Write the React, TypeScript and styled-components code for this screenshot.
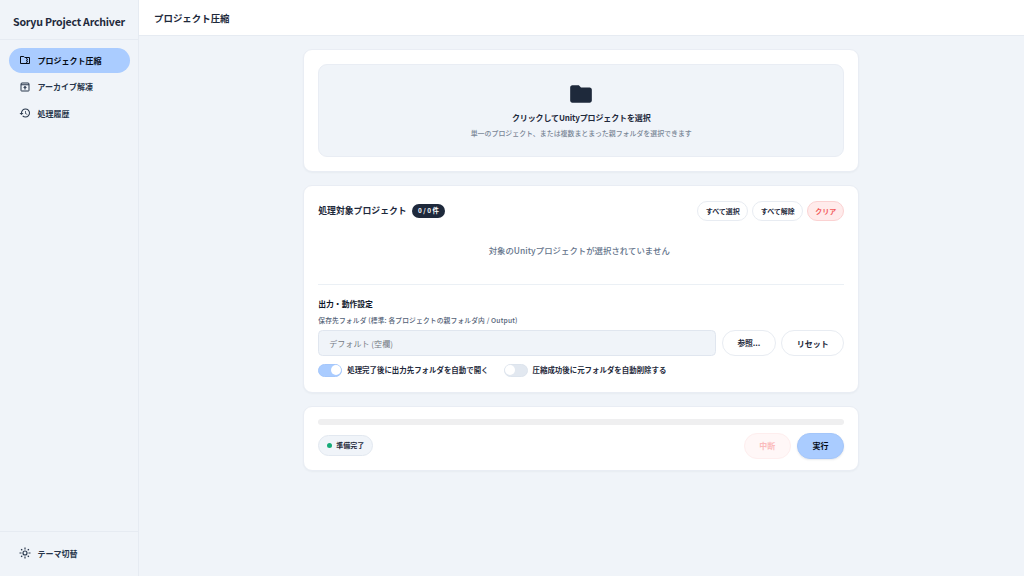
import React from "react";
import styled, { createGlobalStyle, css } from "styled-components";

const GlobalStyle = createGlobalStyle`
  *, *::before, *::after { box-sizing: border-box; }
  body {
    margin: 0;
    background: #f0f4f9;
    color: #1e293b;
    font-family: "Noto Sans CJK JP", "Noto Sans", sans-serif;
    overflow: hidden;
  }
  button, input { font-family: inherit; }
`;

const Shell = styled.div`
  display: grid;
  grid-template-columns: 138.5px 1fr;
  height: 100vh;
`;

const Sidebar = styled.aside`
  display: flex;
  flex-direction: column;
  border-right: 1px solid #e6ebf2;
`;

const Brand = styled.div`
  height: 40px;
  padding: 5px 0 0 13px;
  display: flex;
  align-items: center;
  border-bottom: 1px solid #e6ebf2;
  white-space: nowrap;
`;

const Nav = styled.nav`
  flex: 1;
  display: flex;
  flex-direction: column;
  gap: 2px;
  padding: 8px 8px 0 8.5px;
`;

const NavItem = styled.a<{ $active?: boolean }>`
  display: flex;
  align-items: center;
  gap: 6.5px;
  height: 24.5px;
  padding-left: 10.5px;
  border-radius: 13px;
  color: ${(p) => (p.$active ? "#050b16" : "#27364b")};
  background: ${(p) => (p.$active ? "#aaccff" : "transparent")};
  svg { flex: none; }
`;

const SideFooter = styled.div`
  height: 45px;
  padding: 9px 8px 0 8.5px;
  border-top: 1px solid #e6ebf2;
`;

const Main = styled.main`
  display: flex;
  flex-direction: column;
`;

const Header = styled.header`
  display: flex;
  align-items: center;
  height: 36px;
  padding: 2px 0 0 15.5px;
  background: #fff;
  border-bottom: 1px solid #e6ebf2;
`;

const Content = styled.div`
  display: flex;
  flex-direction: column;
  align-items: center;
  gap: 13.5px;
  padding-top: 12.5px;
`;

const Card = styled.section<{ $height: number }>`
  width: 556px;
  height: ${(p) => p.$height}px;
  padding: 14px;
  background: #fff;
  border: 1px solid #e9edf4;
  border-radius: 9px;
  box-shadow: 0 1px 2px rgba(30, 41, 59, 0.04);
`;

const Label = styled.span<{ $size: number; $spacing?: number; $weight?: number; $color?: string }>`
  font-size: ${(p) => p.$size}px;
  letter-spacing: ${(p) => p.$spacing ?? 0}px;
  font-weight: ${(p) => p.$weight ?? 700};
  line-height: 1.4;
  white-space: nowrap;
  ${(p) => p.$color && css`color: ${p.$color};`}
`;

const DropZone = styled.div`
  display: flex;
  flex-direction: column;
  align-items: center;
  height: 93px;
  padding-top: 16px;
  background: #f0f4f9;
  border: 1px solid #e9edf4;
  border-radius: 9px;
  svg { margin-bottom: 4px; }
`;

const Row = styled.div<{ $gap?: number; $height?: number; $top?: number }>`
  display: flex;
  align-items: center;
  gap: ${(p) => p.$gap ?? 0}px;
  height: ${(p) => (p.$height ? `${p.$height}px` : "auto")};
  margin-top: ${(p) => p.$top ?? 0}px;
`;

const Spacer = styled.div`
  flex: 1;
`;

const Count = styled.span`
  display: flex;
  align-items: center;
  justify-content: center;
  width: 33.5px;
  height: 14px;
  border-radius: 7px;
  color: #fff;
  background: #1e293b;
`;

const tones = {
  plain: css`color: #1e293b; background: #fff; border-color: #e8ecf2;`,
  danger: css`color: #f25a5a; background: #ffebeb; border-color: #fbd2d2;`,
  disabled: css`color: #fbbcbc; background: #fff7f7; border-color: #feeeee;`,
  primary: css`color: #050b16; background: #aaccff; border-color: #a4c6fa; box-shadow: 0 1px 2px rgba(30, 41, 59, 0.1);`,
};

const Button = styled.button<{ $width: number; $height: number; $tone?: keyof typeof tones }>`
  display: flex;
  flex: none;
  align-items: center;
  justify-content: center;
  width: ${(p) => p.$width}px;
  height: ${(p) => p.$height}px;
  padding: 1px 0 0;
  border: 1px solid;
  border-radius: 14px;
  ${(p) => tones[p.$tone ?? "plain"]}
`;

const Empty = styled.div`
  display: flex;
  justify-content: center;
  align-items: center;
  height: 63px;
  padding: 0 4px 4px 0;
  border-bottom: 1px solid #ebf0f5;
`;

const Settings = styled.div`
  display: flex;
  flex-direction: column;
  padding-top: 13.5px;
`;

const PathInput = styled.input`
  flex: 1;
  min-width: 0;
  height: 26px;
  padding: 1px 10px 0;
  border: 1px solid #e0e6ef;
  border-radius: 4.5px;
  background: #f0f4f9;
  font-size: 8px;
  letter-spacing: 0.05px;
  &::placeholder { color: #757b84; }
`;

const Switch = styled.span<{ $on?: boolean }>`
  display: flex;
  align-items: center;
  justify-content: ${(p) => (p.$on ? "flex-end" : "flex-start")};
  width: 24px;
  height: 13px;
  padding: 0 0.5px;
  border-radius: 7px;
  background: ${(p) => (p.$on ? "#aaccff" : "#e2e8f0")};
  border: 1px solid ${(p) => (p.$on ? "#a5c7fb" : "#dde4ed")};
  &::after {
    content: "";
    width: 10px;
    height: 10px;
    border-radius: 50%;
    background: #fff;
  }
`;

const Progress = styled.div`
  height: 5.5px;
  margin-top: -2px;
  border-radius: 3px;
  background: #efeff0;
`;

const Status = styled.div`
  display: flex;
  align-items: center;
  gap: 4px;
  width: 55px;
  height: 21px;
  padding-left: 8px;
  border: 1px solid #e2e8f0;
  border-radius: 11px;
  background: #f0f4f9;
  &::before {
    content: "";
    width: 5px;
    height: 5px;
    border-radius: 50%;
    background: #16ab78;
  }
`;

const ZipFolderIcon = () => (
  <svg width="12" height="12" viewBox="0 0 24 24" fill="none" stroke="currentColor" strokeWidth="2">
    <path d="M3 5h6.600l2 2H21v12H3z" strokeLinejoin="round" />
    <path d="M15 8v2h2v2h-2v2h2v2h-2v2" strokeWidth="1.500" />
  </svg>
);

const UnarchiveIcon = () => (
  <svg width="12" height="12" viewBox="0 0 24 24" fill="none" stroke="currentColor" strokeWidth="2">
    <path d="M5 4h14l1 2v13a1 1 0 0 1-1 1H5a1 1 0 0 1-1-1V6zM4 7.500h16" />
    <path d="M12 9.500l-4 4h2.800v3.500h2.400v-3.500H16z" fill="currentColor" stroke="none" />
  </svg>
);

const HistoryIcon = () => (
  <svg width="12" height="12" viewBox="0 0 24 24" fill="currentColor">
    <path d="M13 3a9 9 0 0 0-9 9H1l3.890 3.890.07.14L9 12H6c0-3.870 3.130-7 7-7s7 3.130 7 7-3.130 7-7 7c-1.930 0-3.680-.79-4.940-2.060l-1.420 1.420A8.954 8.954 0 0 0 13 21a9 9 0 0 0 0-18zm-1 5v5l4.280 2.540.72-1.210-3.500-2.080V8H12z" />
  </svg>
);

const SunIcon = () => (
  <svg width="12" height="12" viewBox="0 0 24 24" fill="none" stroke="currentColor" strokeWidth="2.300">
    <circle cx="12" cy="12" r="4" />
    <path d="M12 1v4M12 19v4M1 12h4M19 12h4M4.200 4.200L6.500 6.500M17.500 17.500l2.300 2.300M4.200 19.800l2.300-2.300M17.500 6.500l2.300-2.300" />
  </svg>
);

const FolderIcon = () => (
  <svg width="26" height="26" viewBox="0 0 24 24" fill="#1e293b">
    <path d="M10 4H4c-1.100 0-1.990.9-1.990 2L2 18c0 1.100.9 2 2 2h16c1.100 0 2-.9 2-2V8c0-1.100-.9-2-2-2h-8l-2-2z" />
  </svg>
);

export default function App() {
  return (
    <>
      <GlobalStyle />
      <Shell>
        <Sidebar>
          <Brand>
            <Label $size={10.6} $weight={700} $spacing={-0.22}>Soryu Project Archiver</Label>
          </Brand>
          <Nav>
            <NavItem $active>
              <ZipFolderIcon />
              <Label $size={8}>プロジェクト圧縮</Label>
            </NavItem>
            <NavItem>
              <UnarchiveIcon />
              <Label $size={8}>アーカイブ解凍</Label>
            </NavItem>
            <NavItem>
              <HistoryIcon />
              <Label $size={8}>処理履歴</Label>
            </NavItem>
          </Nav>
          <SideFooter>
            <NavItem>
              <SunIcon />
              <Label $size={8}>テーマ切替</Label>
            </NavItem>
          </SideFooter>
        </Sidebar>
        <Main>
          <Header>
            <Label $size={9.45}>プロジェクト圧縮</Label>
          </Header>
          <Content>
            <Card $height={123}>
              <DropZone>
                <FolderIcon />
                <Row $top={1}>
                  <Label $size={8} $spacing={-0.13}>クリックしてUnityプロジェクトを選択</Label>
                </Row>
                <Row $top={6}>
                  <Label $size={6.93} $weight={500} $color="#7a8797">
                    単一のプロジェクト、または複数まとまった親フォルダを選択できます
                  </Label>
                </Row>
              </DropZone>
            </Card>
            <Card $height={207.5}>
              <Row $gap={5} $height={22}>
                <Label $size={8.85}>処理対象プロジェクト</Label>
                <Count><Label $size={6.4}>0 / 0 件</Label></Count>
                <Spacer />
                <Row $gap={4}>
                  <Button $width={51} $height={20}><Label $size={7}>すべて選択</Label></Button>
                  <Button $width={51} $height={20}><Label $size={7}>すべて解除</Label></Button>
                  <Button $width={37} $height={20} $tone="danger"><Label $size={7}>クリア</Label></Button>
                </Row>
              </Row>
              <Empty>
                <Label $size={8.4} $weight={500} $color="#64748b" $spacing={0.04}>対象のUnityプロジェクトが選択されていません</Label>
              </Empty>
              <Settings>
                <Label $size={7.8} $color="#0f172a">出力・動作設定</Label>
                <Row $top={7}>
                  <Label $size={6.75} $weight={500} $color="#536176" $spacing={0.15}>
                    保存先フォルダ (標準: 各プロジェクトの親フォルダ内 / Output)
                  </Label>
                </Row>
                <Row $gap={5.5} $top={4}>
                  <PathInput placeholder="デフォルト (空欄)" />
                  <Button $width={54} $height={26}><Label $size={7.8} $spacing={-0.1}>参照...</Label></Button>
                  <Button $width={63} $height={26}><Label $size={8}>リセット</Label></Button>
                </Row>
                <Row $gap={15} $top={8}>
                  <Row $gap={5}>
                    <Switch $on />
                    <Label $size={7.45}>処理完了後に出力先フォルダを自動で開く</Label>
                  </Row>
                  <Row $gap={5}>
                    <Switch />
                    <Label $size={7.45}>圧縮成功後に元フォルダを自動削除する</Label>
                  </Row>
                </Row>
              </Settings>
            </Card>
            <Card $height={65}>
              <Progress />
              <Row $gap={6} $top={8}>
                <Status><Label $size={7}>準備完了</Label></Status>
                <Spacer />
                <Button $width={47} $height={26} $tone="disabled"><Label $size={8}>中断</Label></Button>
                <Button $width={47.5} $height={26} $tone="primary"><Label $size={8}>実行</Label></Button>
              </Row>
            </Card>
          </Content>
        </Main>
      </Shell>
    </>
  );
}
